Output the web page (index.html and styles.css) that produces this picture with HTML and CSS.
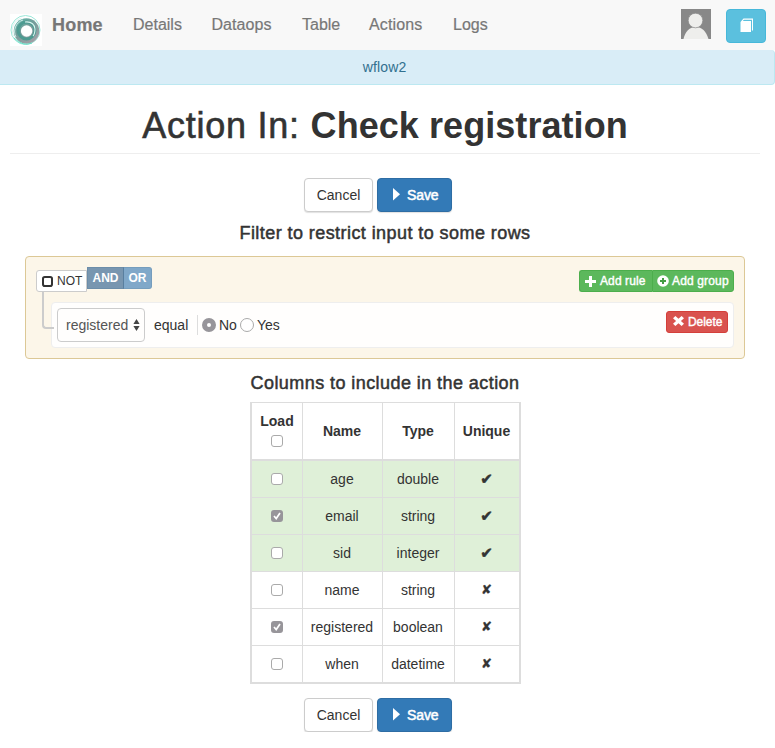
FILE: index.html
```html
<!DOCTYPE html>
<html lang="en">
<head>
<meta charset="utf-8">
<title>Action In: Check registration</title>
<link rel="stylesheet" href="styles.css">
</head>
<body>
<nav class="navbar">
  <svg class="logo" viewBox="0 0 32 32">
    <defs><linearGradient id="ring" x1="0" y1="0" x2=".7" y2="1"><stop offset="0" stop-color="#5fbcae"/><stop offset=".45" stop-color="#719d99"/><stop offset="1" stop-color="#a3a0a7"/></linearGradient></defs>
    <rect width="32" height="32" fill="#fff"/>
    <circle cx="15.5" cy="16" r="14.5" fill="none" stroke="#9be8d9" stroke-width="1"/>
    <circle cx="16.5" cy="17" r="12.8" fill="url(#ring)"/>
    <path d="M3.5 22a13 13 0 0 1 8-18M6 23a12 12 0 0 1 7-17" fill="none" stroke="#d9f3ee" stroke-width=".9"/>
    <circle cx="16.5" cy="16.5" r="8.4" fill="none" stroke="#4d9b91" stroke-width="3"/>
    <path d="M15 8q9-1 10 7 0 5-2 7" fill="none" stroke="#d9f3ee" stroke-width="1.1"/>
    <path d="M4 24q9 9 18 5" fill="none" stroke="#63dfc5" stroke-width="1"/>
    <circle cx="16.6" cy="17" r="5.7" fill="#fff"/>
  </svg>
  <a class="link home">Home</a>
  <a class="link details">Details</a>
  <a class="link dataops">Dataops</a>
  <a class="link table-link">Table</a>
  <a class="link actions-link">Actions</a>
  <a class="link">Logs</a>
  <svg class="avatar" viewBox="0 0 30 30"><rect width="30" height="30" fill="#888"/><path d="M2.5 30C4 23 8 18 14.5 18S25 22 27.5 30z" fill="#eeeeec"/><circle cx="14.5" cy="11.5" r="7.3" fill="#eeeeec" stroke="#888" stroke-width=".7"/></svg>
  <button class="book" aria-label="Documentation"><svg width="14" height="15" viewBox="0 0 14 15"><path d="M.5 4 3.5.5H13V12l-1 1V1.8H4L2.7 3H11v11H.5z" fill="#fff"/></svg></button>
</nav>
<div class="workflow">wflow2</div>
<main>
  <h1><span>Action In: </span><strong>Check registration</strong></h1>
  <div class="actions"><button class="btn cancel">Cancel</button><button class="btn save"><svg width="7" height="13" viewBox="0 0 7 13"><path d="M0 0 7 6.2 0 12.5z" fill="#fff"/></svg><span>Save</span></button></div>
  <h4 class="filter-title">Filter to restrict input to some rows</h4>
  <section class="group">
    <div class="group-head">
      <div class="conditions"><button class="not"><svg width="11" height="11" viewBox="0 0 11 11"><rect x="1" y="1" width="9" height="9" rx="1.8" fill="none" stroke="#333" stroke-width="2"/></svg><span>NOT</span></button><span class="and"><b>AND</b></span><span class="or"><b>OR</b></span></div>
      <div class="adders"><button class="add-rule"><svg width="11" height="11" viewBox="0 0 11 11"><path d="M4 0h3v4h4v3H7v4H4V7H0V4h4z" fill="#fff"/></svg><span>Add rule</span></button><button class="add-group"><svg width="12" height="12" viewBox="0 0 12 12"><circle cx="6" cy="6" r="5.8" fill="#fff"/><path d="M5 3h2v2h2v2H7v2H5V7H3V5h2z" fill="#449d44"/></svg><span>Add group</span></button></div>
    </div>
    <div class="rule">
      <div class="field"><span>registered</span><svg width="7" height="12" viewBox="0 0 7 12"><path d="M3.5 0 6.6 5H.4zM.4 7h6.2L3.5 12z" fill="#444"/></svg></div>
      <span class="operator">equal</span>
      <div class="value"><i class="radio on"></i><span class="no">No</span><i class="radio"></i><span>Yes</span></div>
      <button class="delete"><svg width="11" height="10" viewBox="0 0 11 10"><path d="m2.4 0 3.1 2.8L8.6 0 11 2.2 7.9 5 11 7.8 8.6 10 5.5 7.2 2.4 10 0 7.8 3.1 5 0 2.2z" fill="#fff"/></svg><span>Delete</span></button>
    </div>
  </section>
  <h4 class="columns-title">Columns to include in the action</h4>
  <div class="columns">
    <div class="row head"><div class="load"><b>Load</b><i class="check"></i></div><b>Name</b><b>Type</b><b>Unique</b></div>
    <div class="row key"><div><i class="check"></i></div><span>age</span><span>double</span><span class="mark">✔</span></div>
    <div class="row key"><div><i class="check on"><svg viewBox="0 0 12 12"><path d="m3 6 2.2 2.5L9 3" fill="none" stroke="#fff" stroke-width="1.7"/></svg></i></div><span>email</span><span>string</span><span class="mark">✔</span></div>
    <div class="row key"><div><i class="check"></i></div><span>sid</span><span>integer</span><span class="mark">✔</span></div>
    <div class="row"><div><i class="check"></i></div><span>name</span><span>string</span><span class="mark cross">✘</span></div>
    <div class="row"><div><i class="check on"><svg viewBox="0 0 12 12"><path d="m3 6 2.2 2.5L9 3" fill="none" stroke="#fff" stroke-width="1.7"/></svg></i></div><span>registered</span><span>boolean</span><span class="mark cross">✘</span></div>
    <div class="row"><div><i class="check"></i></div><span>when</span><span>datetime</span><span class="mark cross">✘</span></div>
  </div>
  <div class="actions bottom"><button class="btn cancel">Cancel</button><button class="btn save"><svg width="7" height="13" viewBox="0 0 7 13"><path d="M0 0 7 6.2 0 12.5z" fill="#fff"/></svg><span>Save</span></button></div>
</main>
</body>
</html>
```
FILE: styles.css
```css
* { box-sizing: border-box; }
body { margin: 0; background: #fff; color: #333; font: 14px/20px "Liberation Sans", Arial, sans-serif; overflow: hidden; }
button { font: inherit; margin: 0; padding: 0; display: flex; align-items: center; white-space: nowrap; }
svg { display: block; flex: none; }
.navbar { height: 50px; background: #f8f8f8; display: flex; align-items: flex-start; padding: 0 9px 0 10px; }
.logo { width: 32px; height: 32px; margin: 14px 10px 0 0; }
.link { color: #777; font-size: 16px; line-height: 20px; margin: 15px 29px 0 0; white-space: nowrap; -webkit-text-stroke: .2px #777; }
.home { font-size: 18px; font-weight: bold; width: 52px; letter-spacing: .2px; }
.details { width: 49px; }
.dataops { width: 61px; letter-spacing: .05px; }
.table-link { width: 38px; }
.actions-link { width: 55px; letter-spacing: .15px; }
.details { width: 49.5px; }
.dataops { width: 61.5px; }
.avatar { width: 30px; height: 30px; margin: 9px 15px 0 auto; }
.book { width: 40px; height: 34px; margin-top: 9px; border: 1px solid #46b8da; border-radius: 4px; background: #5bc0de; justify-content: center; padding-left: 2px; padding-bottom: 2px; }
.workflow { height: 35px; background: #d9edf7; border: solid #bce8f1; border-width: 0 1px 1px 0; border-radius: 0 4px 4px 0; text-align: center; color: #31708f; line-height: 35px; padding-right: 5px; letter-spacing: .15px; }
main { padding: 20px 15px 0 10px; }
h1, h4 { margin: 0; font-weight: 400; text-align: center; white-space: nowrap; }
h1 { height: 49px; border-bottom: 1px solid #eee; font-size: 36px; line-height: 41px; }
h1 span { letter-spacing: .75px; -webkit-text-stroke: .6px #333; }
h1 strong { letter-spacing: .06px; }
h4 { font-size: 18px; line-height: 20px; letter-spacing: .43px; -webkit-text-stroke: .5px #333; }
.actions { display: flex; justify-content: center; gap: 4px; margin-top: 24px; padding-right: 14px; }
.btn { height: 34px; border-radius: 4px; border: 1px solid #ccc; justify-content: center; background: #fff; color: #333; box-shadow: 0 1px 1px rgba(0,0,0,.12); }
.cancel { width: 69px; }
.save { width: 75px; gap: 7px; background: #337ab7; border-color: #2e6da4; color: #fff; justify-content: flex-start; padding-left: 15px; }
.save svg { margin-top: -2px; }
.save span { -webkit-text-stroke: .5px #fff; letter-spacing: -.1px; }
.filter-title { margin-top: 11px; }
.group { margin: 13px 5px 0 15px; width: 720px; height: 103px; border: 1px solid #dcc896; border-radius: 4px; background: #fcf6e9; padding: 10px; }
.group-head { display: flex; justify-content: space-between; height: 35px; }
.conditions { display: flex; }
.not { margin-top: 3px; width: 51px; height: 22px; background: #fff; border: 1px solid #ccc; border-radius: 3px 0 0 3px; color: #333; font-size: 12px; gap: 4px; padding-left: 5px; }
.and, .or { height: 22px; color: #fff; font-size: 12px; line-height: 20px; text-align: center; border: 1px solid #6c8da9; }
.and { width: 37px; background: #7896b0; border-right-color: #597f9f; }
.or { width: 28px; background: #80a8c9; border-left: 0; border-color: #759dbd; border-radius: 0 3px 3px 0; }
.adders { display: flex; margin-top: 3px; }
.adders button, .delete { height: 22px; color: #fff; font-size: 12px; -webkit-text-stroke: .4px #fff; }
.adders button { background: #5cb85c; border: 1px solid #4cae4c; padding: 0 0 0 5px; }
.adders .add-rule { width: 73px; border-right: 0; border-radius: 3px 0 0 3px; gap: 4px; letter-spacing: .1px; }
.adders .add-group { width: 82px; border-radius: 0 3px 3px 0; gap: 3px; padding-left: 4px; letter-spacing: .15px; }
.rule { position: relative; margin-left: 15px; height: 46px; border: 1px solid #eee; border-radius: 4px; background: #fffefd; display: flex; padding: 5px; align-items: flex-start; }
.rule::before { content: ""; position: absolute; left: -10px; top: -11px; width: 10px; height: 35px; border: solid #ccc; border-width: 0 0 2px 2px; border-radius: 0 0 0 4px; }
.field { width: 88px; height: 34px; border: 1px solid #ccc; border-radius: 4px; color: #555; display: flex; align-items: center; justify-content: space-between; padding: 0 4px 0 8px; }
.operator { margin: 7px 0 0 9px; width: 43px; }
.value { display: flex; align-items: center; height: 20px; margin-top: 7px; border-left: 1px solid #ddd; padding-left: 4px; }
.radio { width: 14px; height: 14px; border: 1px solid #aaa; border-radius: 50%; background: #fff; margin-right: 3px; }
.radio.on { border: 5px solid #97959a; }
.no { width: 18px; margin-right: 3px; }
.delete { margin: 3px 0 0 auto; width: 62px; background: #d9534f; border: 1px solid #d43f3a; border-radius: 3px; padding-left: 6px; gap: 4px; }
.delete svg { margin-top: -2px; }
.delete span { letter-spacing: -.05px; }
.columns-title { margin-top: 14px; }
.columns { width: 271px; margin: 9px auto 0 240px; border: solid #ddd; border-width: 1px 2px 2px; display: grid; gap: 1px; background: #ddd; }
.row { display: grid; grid-template-columns: 50px 79px 71px 64px; gap: 1px; height: 36px; text-align: center; }
.row > * { background: #fff; display: flex; align-items: center; justify-content: center; padding: 0 1px 1px 0; }
.row > :first-child { padding-right: 0; }
.row.head { height: 56px; margin-bottom: 1px; }
.head > .load { flex-direction: column; padding: 0; }
.key > * { background: #dff0d8; }
.check { display: block; width: 12px; height: 12px; border: 1px solid #aaa; border-radius: 3px; background: #fff; }
.load .check { margin: 4px 0; }
.check.on { border: 0; background: #97959a; }
.mark { font-family: "DejaVu Sans", sans-serif; font-size: 15px; -webkit-text-stroke: .5px #333; }
.mark.cross { font-size: 13px; -webkit-text-stroke: .3px #333; }
.bottom { margin-top: 14px; }
```
